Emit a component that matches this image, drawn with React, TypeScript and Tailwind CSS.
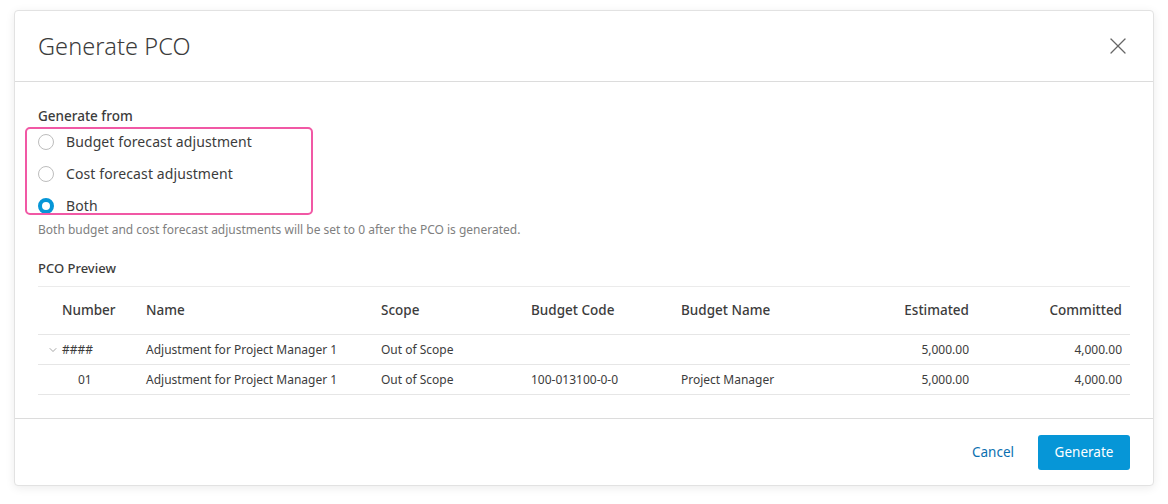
import { X, ChevronDown } from 'lucide-react'

const options = [
  { id: 'budget', label: 'Budget forecast adjustment' },
  { id: 'cost', label: 'Cost forecast adjustment' },
  { id: 'both', label: 'Both' },
]

const rows = [
  { number: '####', parent: true, name: 'Adjustment for Project Manager 1', scope: 'Out of Scope', code: '', budgetName: '', estimated: '5,000.00', committed: '4,000.00' },
  { number: '01', parent: false, name: 'Adjustment for Project Manager 1', scope: 'Out of Scope', code: '100-013100-0-0', budgetName: 'Project Manager', estimated: '5,000.00', committed: '4,000.00' },
]

const cols = 'grid grid-cols-[108px_235px_150px_150px_143px_153px_153px]'

function Radio({ checked }: { checked: boolean }) {
  if (checked) {
    return <span className="w-4 h-4 rounded-full border-[4px] border-[#0696d7] bg-white" />
  }
  return <span className="w-4 h-4 rounded-full border border-[#bdbdbd] bg-white" />
}

export default function App() {
  const selected = 'both'

  return (
    <div className="w-[1168px] h-[504px] bg-white pt-[10px] px-[14px] font-['Noto_Sans',sans-serif] text-[#3c3c3c]">
      <div className="w-[1140px] h-[476px] rounded-[4px] border border-[#e2e2e2] bg-white shadow-[0_2px_10px_rgba(0,0,0,0.08)] flex flex-col">
        <div className="h-[71px] border-b border-[#dcdcdc] flex items-center justify-between pl-[23px] pr-[21px]">
          <h1 className="text-[23.5px] font-light tracking-[0.1px] text-[#3c3c3c] pt-[2px]">Generate PCO</h1>
          <X className="w-7 h-7 text-[#666]" strokeWidth={1.1} />
        </div>

        <div className="flex-1 pl-[23px] pr-[23px] pt-[24px]">
          <div className="text-[13.5px] font-medium leading-[20px]">Generate from</div>
          <div className="relative">
            <div className="absolute -left-[13px] top-[1px] w-[288px] h-[88px] rounded-[5px] border-2 border-[#f158a5]" />
            {options.map(o => (
              <div key={o.id} className="h-[32px] flex items-center gap-3">
                <Radio checked={o.id === selected} />
                <span className="text-[14px] leading-none tracking-[0.1px]">{o.label}</span>
              </div>
            ))}
          </div>
          <p className="text-[12px] text-[#808080] leading-[16px]">
            Both budget and cost forecast adjustments will be set to 0 after the PCO is generated.
          </p>

          <div className="mt-[20px] text-[13px] font-medium leading-[20px]">PCO Preview</div>

          <div className="mt-[8px] border-t border-[#ebebeb]">
            <div className={`${cols} h-[48px] items-center border-b border-[#e6e6e6] text-[13.5px] font-medium`}>
              <div className="pl-6">Number</div>
              <div>Name</div>
              <div>Scope</div>
              <div>Budget Code</div>
              <div>Budget Name</div>
              <div className="text-right pr-2">Estimated</div>
              <div className="text-right pr-2">Committed</div>
            </div>
            {rows.map((r, i) => (
              <div key={i} className={`${cols} h-[30px] items-center border-b border-[#e6e6e6] text-[12px]`}>
                {r.parent ? (
                  <div className="pl-[9px] flex items-center gap-[3px]">
                    <ChevronDown className="w-3 h-3 text-[#777]" strokeWidth={1.3} />
                    <span>{r.number}</span>
                  </div>
                ) : (
                  <div className="pl-10">{r.number}</div>
                )}
                <div>{r.name}</div>
                <div>{r.scope}</div>
                <div>{r.code}</div>
                <div>{r.budgetName}</div>
                <div className="text-right pr-2">{r.estimated}</div>
                <div className="text-right pr-2">{r.committed}</div>
              </div>
            ))}
          </div>
        </div>

        <div className="h-[67px] border-t border-[#dcdcdc] flex items-center justify-end gap-6 pr-[23px]">
          <button className="text-[13.5px] text-[#0a6fb0] px-0">Cancel</button>
          <button className="w-[92px] h-[35px] rounded-[3px] bg-[#0696d7] text-white text-[13.5px]">Generate</button>
        </div>
      </div>
    </div>
  )
}
